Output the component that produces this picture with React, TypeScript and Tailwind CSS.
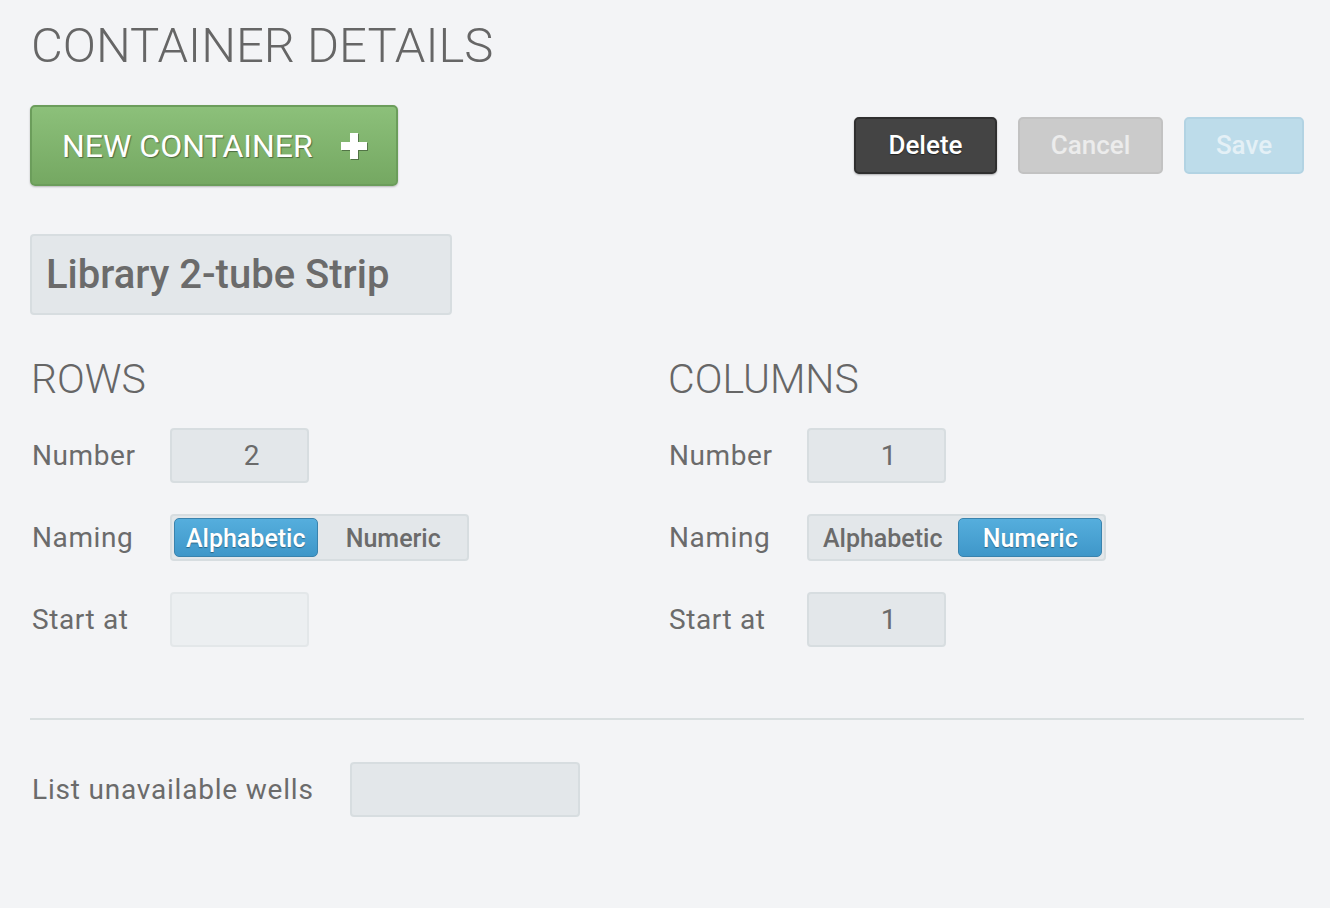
import React, { useState } from 'react';

const font = { fontFamily: 'Roboto, "Open Sans", "Liberation Sans", sans-serif' };

function PlusIcon() {
  return (
    <svg width="30" height="30" viewBox="0 0 30 30" className="drop-shadow-[1px_1px_0_rgba(0,0,0,0.35)]">
      <path d="M11 2h8v9h9v8h-9v9h-8v-9H2v-8h9z" fill="#ffffff" />
    </svg>
  );
}

function ValueBox({ value, dim }: { value?: string; dim?: boolean }) {
  return (
    <div
      className={`flex h-[55px] w-[139px] items-center justify-center rounded-[4px] border-2 pl-[24px] text-[28px] text-[#6b6b6b] ${
        dim ? 'border-[#e3e7e9] bg-[#eceff1]' : 'border-[#d7dde0] bg-[#e3e7ea]'
      }`}
    >
      {value}
    </div>
  );
}

function Segmented({ active }: { active: 'Alphabetic' | 'Numeric' }) {
  const opts: ('Alphabetic' | 'Numeric')[] = ['Alphabetic', 'Numeric'];
  return (
    <div className="flex h-[47px] w-[299px] items-center gap-[4px] rounded-[4px] border-2 border-[#d7dde0] bg-[#e3e7ea] p-[2px]">
      {opts.map((o) =>
        o === active ? (
          <div
            key={o}
            className="flex h-[39px] w-[146px] items-center justify-center rounded-[5px] border border-[#3a83ad] bg-gradient-to-b from-[#55aedd] to-[#3f97c9] pt-[3px] text-[25px] font-medium text-white [text-shadow:0_1px_1px_rgba(0,0,0,0.35)]"
          >
            {o}
          </div>
        ) : (
          <div key={o} className="flex h-[39px] w-[146px] items-center justify-center pt-[3px] text-[25px] font-medium text-[#6b6b6b]">
            {o}
          </div>
        )
      )}
    </div>
  );
}

function Section({
  title,
  number,
  naming,
  start,
  startDim,
}: {
  title: string;
  number: string;
  naming: 'Alphabetic' | 'Numeric';
  start?: string;
  startDim?: boolean;
}) {
  const label = 'w-[140px] pl-[2px] text-[28px] tracking-[0.6px] text-[#6b6b6b]';
  return (
    <div>
      <h2 className="h-[60px] pl-[1px] text-[41px] font-light leading-[60px] text-[#666]">{title}</h2>
      <div className="mt-[19px] flex items-center">
        <span className={label}>Number</span>
        <ValueBox value={number} />
      </div>
      <div className="mt-[31px] flex items-center">
        <span className={label}>Naming</span>
        <Segmented active={naming} />
      </div>
      <div className="mt-[31px] flex items-center">
        <span className={label}>Start at</span>
        <ValueBox value={start} dim={startDim} />
      </div>
    </div>
  );
}

export default function App() {
  const [name] = useState('Library 2-tube Strip');
  return (
    <div style={font} className="min-h-[908px] w-full bg-[#f3f4f6] pl-[30px] pr-[26px] pt-[14px]">
      <h1 className="h-[64px] pl-[1px] text-[49px] font-light leading-[64px] text-[#666]">CONTAINER DETAILS</h1>

      <div className="mt-[27px] flex items-start justify-between">
        <button className="flex h-[81px] w-[368px] items-center gap-[26px] rounded-[5px] border-2 border-[#6b9d5b] bg-gradient-to-b from-[#8cc07a] to-[#75a862] pl-[30px] text-[32px] text-white shadow-[0_1px_2px_rgba(0,0,0,0.25)] [text-shadow:1px_1px_1px_rgba(0,0,0,0.4)]">
          NEW CONTAINER
          <PlusIcon />
        </button>
        <div className="mt-[12px] flex gap-[21px]">
          <button className="h-[57px] w-[143px] rounded-[5px] border-2 border-[#2f2f2f] bg-[#444] text-[26px] font-medium text-white shadow-[0_1px_2px_rgba(0,0,0,0.3)] [text-shadow:0_1px_1px_rgba(0,0,0,0.5)]">
            Delete
          </button>
          <button className="h-[57px] w-[145px] rounded-[5px] border-2 border-[#c2c2c2] bg-[#cbcbcb] text-[26px] font-medium text-[#ececec]">
            Cancel
          </button>
          <button className="h-[57px] w-[120px] rounded-[5px] border-2 border-[#b2d3e3] bg-[#bddcea] text-[26px] font-medium text-[#e4f0f6]">
            Save
          </button>
        </div>
      </div>

      <div className="mt-[48px] flex h-[81px] w-[422px] items-center rounded-[4px] border-2 border-[#d7dde0] bg-[#e3e7ea] pl-[14px] text-[40px] font-medium text-[#6b6b6b]">
        {name}
      </div>

      <div className="mt-[34px] grid grid-cols-2">
        <Section title="ROWS" number="2" naming="Alphabetic" startDim />
        <Section title="COLUMNS" number="1" naming="Numeric" start="1" />
      </div>

      <div className="mt-[71px] h-[2px] w-full bg-[#d9dfe0]" />

      <div className="mt-[42px] flex items-center">
        <span className="w-[320px] pl-[2px] text-[28px] tracking-[0.8px] text-[#6b6b6b]">List unavailable wells</span>
        <div className="h-[55px] w-[230px] rounded-[4px] border-2 border-[#d7dde0] bg-[#e3e7ea]" />
      </div>
    </div>
  );
}
